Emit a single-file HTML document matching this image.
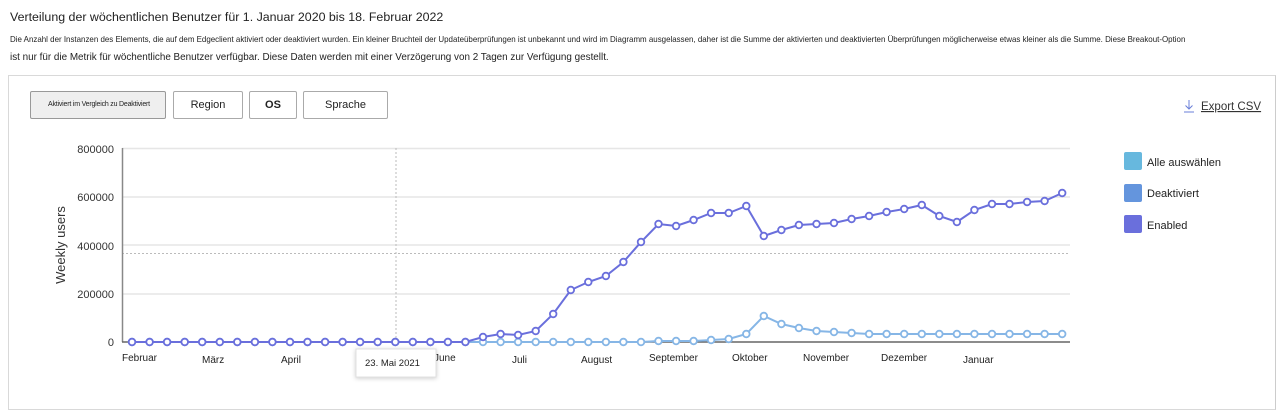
<!DOCTYPE html>
<html><head><meta charset="utf-8"><style>
body{margin:0;width:1284px;height:418px;background:#fff;font-family:"Liberation Sans",sans-serif;position:relative;overflow:hidden;color:#222}
.t{position:absolute;left:10px;top:10px;font-size:12.4px;color:#222}
.d1{position:absolute;left:10px;top:35px;font-size:7.95px;color:#222;white-space:nowrap}
.d2{position:absolute;left:10px;top:52px;font-size:9.9px;color:#222;white-space:nowrap}
.box{position:absolute;left:8px;top:75px;width:1266px;height:333px;border:1px solid #d9d9d9;border-right:1px solid #ccc}
.btn{position:absolute;top:91px;height:28px;border:1px solid #aaa;background:#fff;font-size:11px;display:flex;align-items:center;justify-content:center;box-sizing:border-box;border-radius:2px}
</style></head><body>
<div class="t">Verteilung der wöchentlichen Benutzer für 1. Januar 2020 bis 18. Februar 2022</div>
<div class="d1">Die Anzahl der Instanzen des Elements, die auf dem Edgeclient aktiviert oder deaktiviert wurden. Ein kleiner Bruchteil der Updateüberprüfungen ist unbekannt und wird im Diagramm ausgelassen, daher ist die Summe der aktivierten und deaktivierten Überprüfungen möglicherweise etwas kleiner als die Summe. Diese Breakout-Option</div>
<div class="d2">ist nur für die Metrik für wöchentliche Benutzer verfügbar. Diese Daten werden mit einer Verzögerung von 2 Tagen zur Verfügung gestellt.</div>
<div class="box"></div>
<div class="btn" style="left:30px;width:136px;background:#efefef;border-color:#999;font-size:7px;justify-content:flex-start;padding-left:17px;white-space:nowrap;letter-spacing:-0.2px;align-items:flex-start;padding-top:9px">Aktiviert im Vergleich zu Deaktiviert</div>
<div class="btn" style="left:173px;width:70px">Region</div>
<div class="btn" style="left:249px;width:48px;font-weight:bold">OS</div>
<div class="btn" style="left:303px;width:85px">Sprache</div>
<svg width="1284" height="418" style="position:absolute;left:0;top:0" id="s" font-family="Liberation Sans, sans-serif">
<g stroke="#e6e6e6" stroke-width="1.5">
<line x1="122" x2="1070" y1="148.5" y2="148.5"/><line x1="122" x2="1070" y1="197" y2="197"/><line x1="122" x2="1070" y1="245" y2="245"/><line x1="122" x2="1070" y1="294" y2="294"/></g>
<line x1="122" x2="1070" y1="253.5" y2="253.5" stroke="#bbb" stroke-dasharray="2,2"/>
<line x1="396" x2="396" y1="148" y2="342" stroke="#bbb" stroke-dasharray="2,2"/>
<line x1="122.5" x2="122.5" y1="148" y2="342" stroke="#888" stroke-width="1.5"/>
<line x1="122" x2="1070" y1="342" y2="342" stroke="#666" stroke-width="1.5"/>
<g font-size="11" fill="#333" text-anchor="end">
<text x="114" y="153">800000</text><text x="114" y="201">600000</text><text x="114" y="250">400000</text><text x="114" y="298">200000</text><text x="114" y="346">0</text></g>
<text transform="translate(65,245) rotate(-90)" text-anchor="middle" font-size="13" fill="#333">Weekly users</text>
<g font-size="10" fill="#222">
<text x="122" y="361">Februar</text><text x="202" y="363">März</text><text x="281" y="363">April</text><text x="434" y="361">June</text><text x="512" y="363">Juli</text><text x="581" y="363">August</text><text x="649" y="361">September</text><text x="732" y="361">Oktober</text><text x="803" y="361">November</text><text x="881" y="361">Dezember</text><text x="963" y="363">Januar</text></g>
<rect x="356" y="349" width="80" height="28" fill="#fff" stroke="#e0e0e0" style="filter:drop-shadow(0 1px 2px rgba(0,0,0,.2))"/>
<text x="365" y="366" font-size="9.5" fill="#222">23. Mai 2021</text>
<g id="lines"></g>
<g><rect x="1124" y="152" width="18" height="18" rx="2" fill="#67b8de"/><rect x="1124" y="184" width="18" height="18" rx="2" fill="#6495dd"/><rect x="1124" y="215" width="18" height="18" rx="2" fill="#6a6fdc"/></g>
<g font-size="11" fill="#222"><text x="1147" y="166">Alle auswählen</text><text x="1147" y="197">Deaktiviert</text><text x="1147" y="229">Enabled</text></g>
<text x="1201" y="110" font-size="11.5" fill="#333" text-decoration="underline">Export CSV</text>
<path d="M1189 100v9M1185.5 105.5l3.5 3.5 3.5-3.5M1184 112h10" stroke="#6a7fd8" fill="none" stroke-width="1"/>
</svg>
<script>
var en=[342,342,342,342,342,342,342,342,342,342,342,342,342,342,342,342,342,342,342,342,337,334,335,331,314,290,282,276,262,242,224,226,220,213,213,206,236,230,225,224,223,219,216,212,209,205,216,222,210,204,204,202,201,193];
var de=en.map(function(v,i){if(i<30)return 342;var a={30:341,31:341,32:341,33:340,34:339,35:334,36:316,37:324,38:328,39:331,40:332,41:333};return a[i]||334;});
function mk(arr,c){var x=function(i){return 132+17.55*i};var p=arr.map(function(v,i){return (i?'L':'M')+x(i).toFixed(1)+' '+v}).join('');var s='<path d="'+p+'" fill="none" stroke="'+c+'" stroke-width="2"/>';arr.forEach(function(v,i){s+='<circle cx="'+x(i).toFixed(1)+'" cy="'+v+'" r="3.3" fill="#fff" stroke="'+c+'" stroke-width="1.8"/>'});return s;}
document.getElementById('lines').innerHTML=mk(de,'#86b6e6')+mk(en,'#6a6fdc');
</script>
</body></html>
